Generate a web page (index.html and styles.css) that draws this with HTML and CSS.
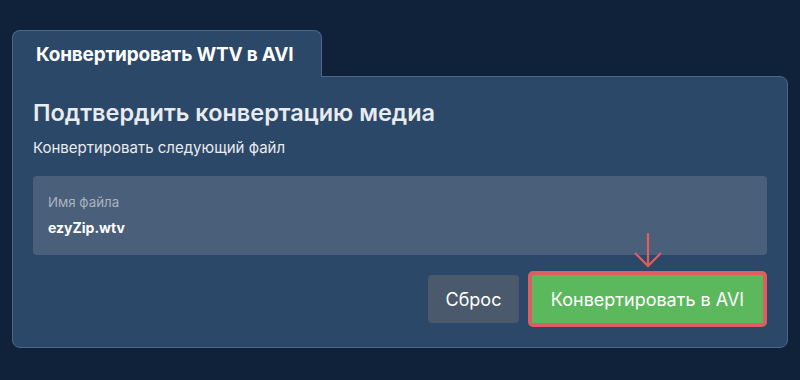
FILE: index.html
```html
<!DOCTYPE html>
<html lang="ru">
<head>
  <meta charset="UTF-8">
  <title>Конвертировать WTV в AVI</title>
  <link rel="stylesheet" href="styles.css">
</head>
<body>
  <div class="card">
    <div class="tab">Конвертировать WTV в AVI</div>
    <div class="panel">
      <h1 class="title">Подтвердить конвертацию медиа</h1>
      <p class="subtitle">Конвертировать следующий файл</p>
      <div class="file-box">
        <div class="file-label">Имя файла</div>
        <div class="file-name">ezyZip.wtv</div>
      </div>
      <div class="actions">
        <button class="button button-reset">Сброс</button>
        <div class="convert-wrap">
          <svg class="arrow" width="30" height="36" viewBox="0 0 30 36">
            <path d="M15 1 V34 M2 21 L15 34 L28 21" fill="none" stroke="#e05d5d" stroke-width="2.2"/>
          </svg>
          <button class="button button-convert">Конвертировать в AVI</button>
        </div>
      </div>
    </div>
  </div>
</body>
</html>
```

FILE: styles.css
```css
* {
  box-sizing: border-box;
  margin: 0;
  padding: 0;
}

body {
  background-color: #10223a;
  font-family: Inter, "Noto Sans", sans-serif;
  color: #ffffff;
  padding: 30px 12px 0 12px;
}

.tab {
  position: relative;
  z-index: 1;
  display: inline-block;
  width: 310px;
  height: 47px;
  margin-bottom: -1px;
  padding: 12px 0 0 23px;
  font-size: 19px;
  font-weight: 700;
  letter-spacing: -0.2px;
  background-color: #2c4868;
  border: 1px solid #4b6688;
  border-bottom: none;
  border-radius: 8px 8px 0 0;
}

.panel {
  padding: 20px;
  background-color: #2c4868;
  border: 1px solid #4b6688;
  border-radius: 0 8px 8px 8px;
}

.title {
  font-size: 23.5px;
  font-weight: 600;
  line-height: 32px;
  color: #e8ebef;
}

.subtitle {
  margin-top: 9px;
  font-size: 15px;
  line-height: 20px;
  color: #e8ebef;
}

.file-box {
  margin-top: 18px;
  height: 79px;
  padding: 18px 15px 0 15px;
  background-color: #4a5f79;
  border-radius: 4px;
}

.file-label {
  font-size: 13.3px;
  line-height: 16px;
  color: #a9b4c2;
}

.file-name {
  margin-top: 9px;
  font-size: 14px;
  font-weight: 700;
  line-height: 18px;
}

.actions {
  display: flex;
  justify-content: flex-end;
  align-items: center;
  gap: 9px;
  margin-top: 16px;
}

.button {
  height: 48px;
  font-family: Inter, "Noto Sans", sans-serif;
  font-size: 18px;
  color: #ffffff;
  border: none;
  border-radius: 4px;
  cursor: pointer;
}

.button-reset {
  width: 91px;
  background-color: #4a5a6c;
}

.convert-wrap {
  position: relative;
}

.arrow {
  position: absolute;
  left: 50%;
  bottom: 100%;
  margin-left: -15px;
  margin-bottom: 3px;
}

.button-convert {
  display: block;
  width: 239px;
  height: 56px;
  background-color: #5cb85c;
  border: 4px solid #e05d5d;
  border-radius: 5px;
}
```
